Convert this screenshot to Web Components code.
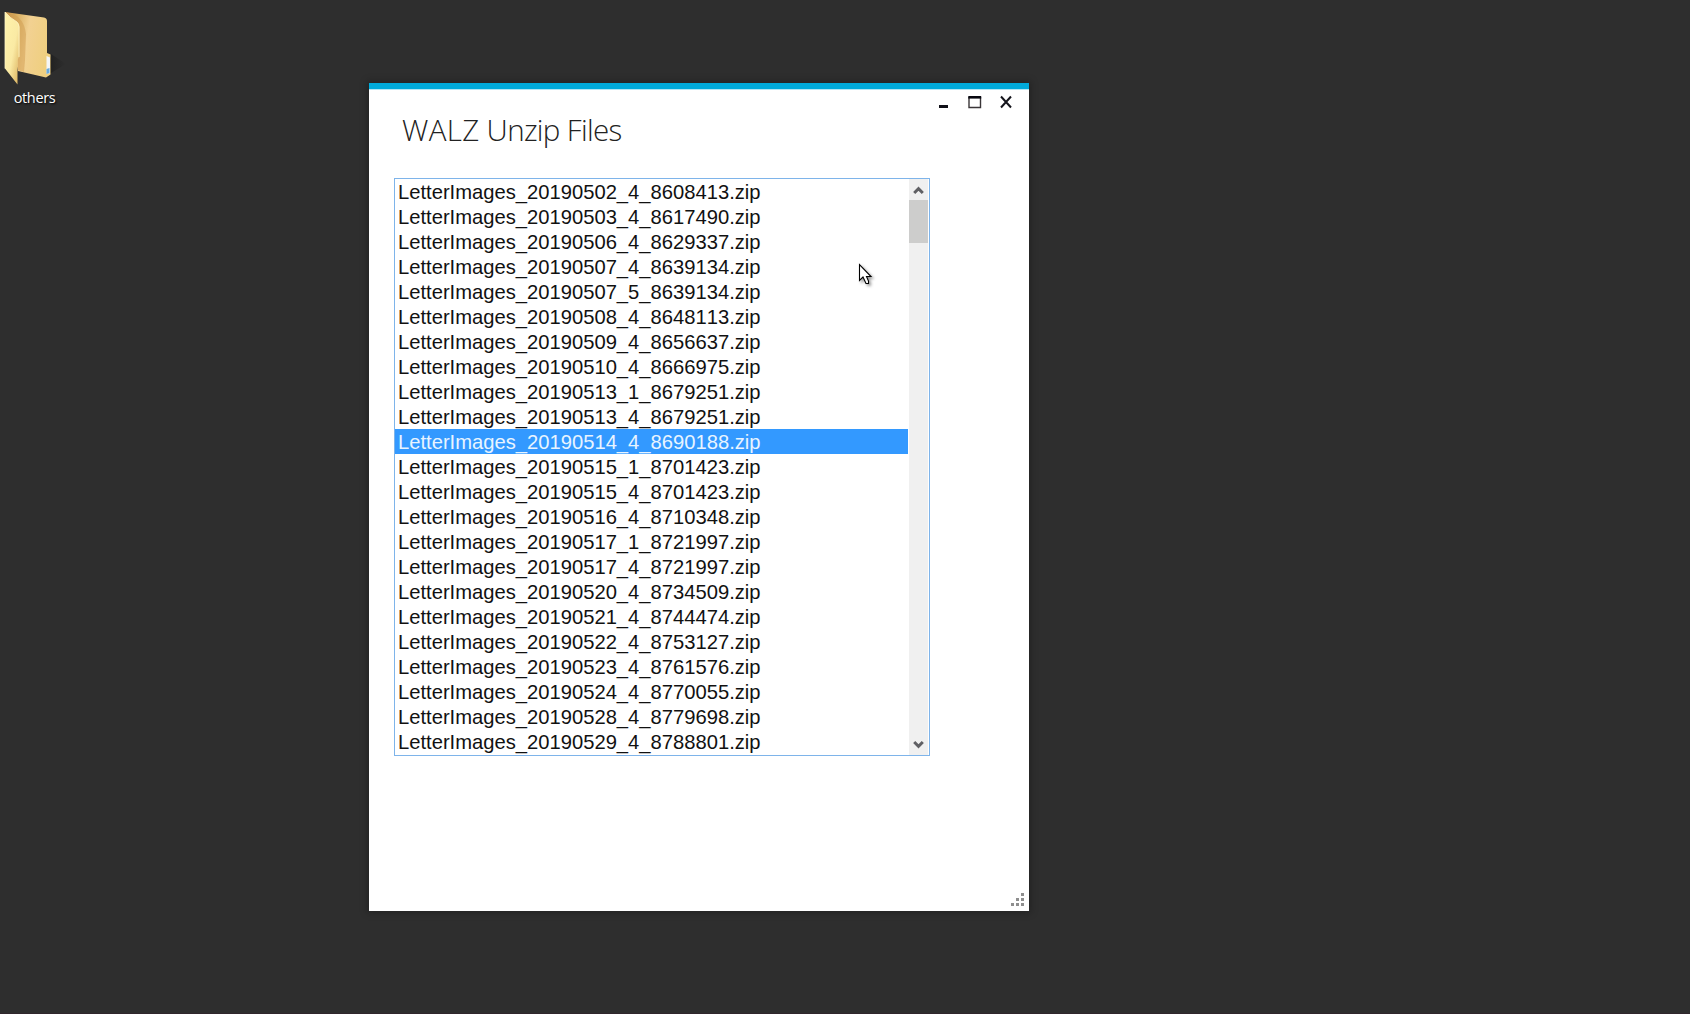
<!DOCTYPE html>
<html lang="en">
<head>
<meta charset="utf-8">
<title>WALZ Unzip Files</title>
<style>
html, body { margin: 0; height: 100%; overflow: hidden; background: #2e2e2e; }
</style>
</head>
<body>
<desktop-surface>
  <desktop-icon label="others"></desktop-icon>
  <app-window heading="WALZ Unzip Files">
    <file-list selected="10"></file-list>
  </app-window>
  <mouse-pointer></mouse-pointer>
</desktop-surface>
<script>
class Base extends HTMLElement {
  connectedCallback() {
    if (!this.shadowRoot) this.attachShadow({ mode: 'open' }).innerHTML = this.render();
  }
}

customElements.define('desktop-surface', class extends Base {
  render() {
    return `<style>
      :host { display: block; position: relative; width: 100vw; height: 100vh; background: #2e2e2e; overflow: hidden; box-shadow: inset 0 -1px #30262c; }
      ::slotted(desktop-icon) { position: absolute; left: 0; top: 0; }
      ::slotted(app-window) { position: absolute; left: 369px; top: 83px; }
      ::slotted(mouse-pointer) { position: absolute; left: 858px; top: 263px; }
    </style><slot></slot>`;
  }
});

customElements.define('desktop-icon', class extends Base {
  render() {
    return `<style>
      :host { display: flex; flex-direction: column; width: 69px; }
      svg { display: block; }
      span { font: 14.500px/20px "Open Sans", sans-serif; color: #fff; text-align: center; text-shadow: 1px 1px 2px #000; letter-spacing: -0.35px; margin-top: 2px; }
    </style>
    <svg width="69" height="86" viewBox="0 0 69 86">
      <defs>
        <linearGradient id="front" x1="0" y1="0" x2="1" y2="1">
          <stop offset="0" stop-color="#fff3ab"/><stop offset=".55" stop-color="#faeaa4"/><stop offset="1" stop-color="#d9ad57"/>
        </linearGradient>
        <linearGradient id="back" x1="0" y1="0" x2="1" y2=".25">
          <stop offset="0" stop-color="#c08d48"/><stop offset=".25" stop-color="#d8ae60"/><stop offset=".55" stop-color="#f2d192"/><stop offset="1" stop-color="#efcf80"/>
        </linearGradient>
        <linearGradient id="shade" x1="0" x2="1">
          <stop offset="0" stop-color="#1e1e1e"/><stop offset="1" stop-color="#2e2e2e"/>
        </linearGradient>
      </defs>
      <path d="M46 76 51 54 66 64Z" fill="url(#shade)"/>
      <path d="M5 12 44 17.5Q47 18 47 21V53L50.500 54.500V74.500L46 77.500 18 71Z" fill="url(#back)"/>
      <path d="M5 12 12 13.500Q24 18 26 34L25 60 24 72 18 70V26Z" fill="#cf9c50" opacity=".5"/>
      <path d="M46.500 56 50 57.500V73L46.500 74Z" fill="#f4f6f8"/>
      <path d="M46.500 69 49.500 68V73L46.500 74Z" fill="#69a9dc"/>
      <path d="M5 12Q10 18 17 22Q19.500 24 19.500 27V56L17.500 60V84.500L5 68.500Z" fill="url(#front)"/>
      <path d="M5 68.500V12Q10 18 17 22Q19 24 19 27V57" fill="none" stroke="#fff5c5" stroke-width=".8"/>
    </svg>
    <span>${this.getAttribute('label')}</span>`;
  }
});

customElements.define('app-window', class extends Base {
  render() {
    const [first, ...rest] = this.getAttribute('heading').split(' ');
    return `<style>
      :host { display: flex; flex-direction: column; box-sizing: border-box; width: 660px; height: 828px; background: #fff; border-top: 6px solid #00aada; box-shadow: 0 0 7px 2px rgba(0,0,0,.25); }
      .line { height: 1px; background: #b3e6f5; flex: none; }
      header { display: flex; justify-content: space-between; height: 88px; flex: none; }
      h1 { margin: 20px 0 0 33px; font: 300 29.5px/40px "Open Sans", sans-serif; color: #222; white-space: nowrap; letter-spacing: -0.65px; }
      h1 span { letter-spacing: .35px; }
      main { padding-left: 25px; flex: 1; }
      footer { display: flex; justify-content: flex-end; padding: 0 4px 4px 0; }
      svg { display: block; }
      .buttons { margin: 5px 15px 0 0; }
    </style>
    <div class="line"></div>
    <header>
      <h1><span>${first}</span> ${rest.join(' ')}</h1>
      <svg class="buttons" width="77" height="14" viewBox="0 0 77 14">
        <path d="M2 10h9v3H2z" fill="#101018"/>
        <path d="M32 2V12.500H43.500V2" fill="none" stroke="#3a3638" stroke-width="1.400"/>
        <path d="M31.300 1h12.900v2.600H31.300z" fill="#080810"/>
        <path d="M64 1.500 74 12.500M74 1.500 64 12.500" fill="none" stroke="#15151c" stroke-width="2"/>
      </svg>
    </header>
    <main><slot></slot></main>
    <footer>
      <svg width="15" height="15" viewBox="0 0 15 15" fill="#8e8e8e">
        <path d="M11 1h3v3h-3zM6 6h3v3H6zM11 6h3v3h-3zM1 11h3v3H1zM6 11h3v3H6zM11 11h3v3h-3z"/>
      </svg>
    </footer>`;
  }
});

customElements.define('scroll-bar', class extends Base {
  render() {
    return `<style>
      :host { display: flex; flex-direction: column; width: 19px; background: #f0f0f0; }
      svg { display: block; flex: none; }
      .thumb { height: 43px; background: #cdcdcc; }
      .track { flex: 1; }
    </style>
    <svg width="19" height="21" viewBox="0 0 19 21"><path d="M5.200 14 9.500 9.700 13.800 14" fill="none" stroke="#606064" stroke-width="3"/></svg>
    <div class="thumb"></div><div class="track"></div>
    <svg width="19" height="21" viewBox="0 0 19 21"><path d="M5.200 8 9.500 12.300 13.800 8" fill="none" stroke="#606064" stroke-width="3"/></svg>`;
  }
});

customElements.define('file-list', class extends Base {
  render() {
    const ids = ['0502_4_8608413','0503_4_8617490','0506_4_8629337','0507_4_8639134','0507_5_8639134',
      '0508_4_8648113','0509_4_8656637','0510_4_8666975','0513_1_8679251','0513_4_8679251','0514_4_8690188',
      '0515_1_8701423','0515_4_8701423','0516_4_8710348','0517_1_8721997','0517_4_8721997','0520_4_8734509',
      '0521_4_8744474','0522_4_8753127','0523_4_8761576','0524_4_8770055','0528_4_8779698','0529_4_8788801'];
    const sel = Number(this.getAttribute('selected'));
    return `<style>
      :host { display: flex; box-sizing: border-box; width: 536px; height: 578px; border: 1px solid #7eb4ea; padding-right: 1px; background: #fff; }
      ul { list-style: none; margin: 0; padding: 0; width: 513px; overflow: hidden; font: 20.200px/27px "Liberation Sans", Arial, sans-serif; font-kerning: none; color: #111; }
      li { height: 25px; padding-left: 3px; white-space: nowrap; }
      li.on { background: #3399ff; color: #e8f4ff; }
      scroll-bar { margin-left: auto; }
    </style>
    <ul>${ids.map((n, i) => `<li${i === sel ? ' class="on"' : ''}>LetterImages_2019${n}.zip</li>`).join('')}</ul>
    <scroll-bar></scroll-bar>`;
  }
});

customElements.define('mouse-pointer', class extends Base {
  render() {
    return `<style>
      :host { display: block; filter: drop-shadow(2px 2px 1.500px rgba(0,0,0,.4)); }
      svg { display: block; }
    </style>
    <svg width="16" height="23" viewBox="0 0 16 23"><path d="M1.500 1.500V17.500L5 14 8 20.500H10.500V18L8.500 13.500H13Z" fill="#fff" stroke="#000" stroke-width="1.100"/></svg>`;
  }
});
</script>
</body>
</html>
